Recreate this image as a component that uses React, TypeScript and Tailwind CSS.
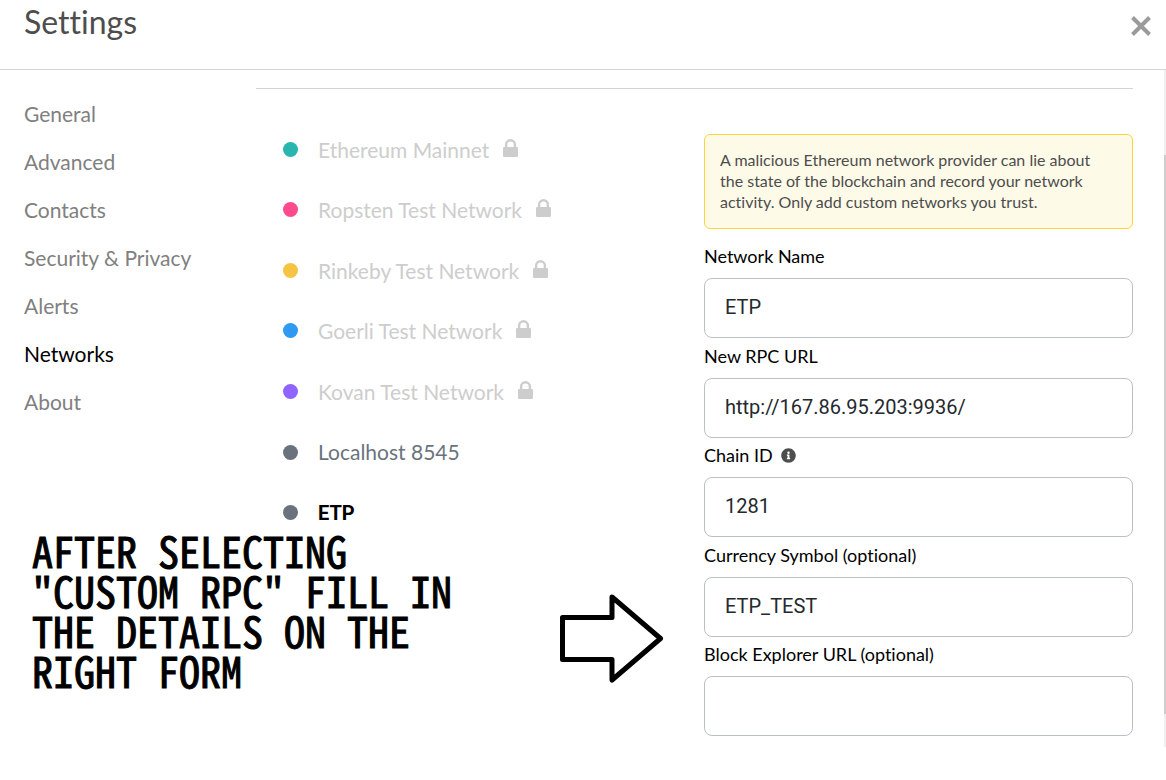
import { FaInfoCircle } from "react-icons/fa";

const tabs = ["General", "Advanced", "Contacts", "Security & Privacy", "Alerts", "Networks", "About"];

type Network = { name: string; dot: string; text: string; locked?: boolean };

const networks: Network[] = [
  { name: "Ethereum Mainnet", dot: "bg-[#29b6af]", text: "text-[21px] text-[#cdcdcd]", locked: true },
  { name: "Ropsten Test Network", dot: "bg-[#ff4a8d]", text: "text-[21px] text-[#cdcdcd]", locked: true },
  { name: "Rinkeby Test Network", dot: "bg-[#f6c343]", text: "text-[21px] text-[#cdcdcd]", locked: true },
  { name: "Goerli Test Network", dot: "bg-[#3099f2]", text: "text-[21px] text-[#cdcdcd]", locked: true },
  { name: "Kovan Test Network", dot: "bg-[#9064ff]", text: "text-[21px] text-[#cdcdcd]", locked: true },
  { name: "Localhost 8545", dot: "bg-[#6a737d]", text: "text-[21px] text-[#6a737d]" },
  { name: "ETP", dot: "bg-[#6a737d]", text: "font-['Roboto',sans-serif] text-xl font-bold text-black" },
];

const fields = [
  { id: "network-name", label: "Network Name", value: "ETP" },
  { id: "rpc-url", label: "New RPC URL", value: "http://167.86.95.203:9936/" },
  { id: "chain-id", label: "Chain ID", value: "1281", info: true },
  { id: "currency-symbol", label: "Currency Symbol (optional)", value: "ETP_TEST" },
  { id: "block-explorer", label: "Block Explorer URL (optional)", value: "" },
];

function LockIcon() {
  return (
    <svg viewBox="0 0 15 18" className="mb-[3px] ml-3.5 h-[18px] w-[15px]" aria-hidden="true">
      <path d="M3.1 9V5.6a4.4 4.4 0 0 1 8.8 0V9" fill="none" stroke="currentColor" strokeWidth="2.4" />
      <rect y="8" width="15" height="10" rx="1.2" fill="currentColor" />
    </svg>
  );
}

function Header() {
  return (
    <header className="flex h-[70px] items-start justify-between border-b border-[#d2d4d6] pl-6 pr-3.5">
      <h1 className="pt-1 text-[32px] leading-9 text-[#4d4d4d]">Settings</h1>
      <button type="button" aria-label="Close" className="mt-[15px] p-px text-[#9b9b9b]">
        <svg viewBox="0 0 20 20" className="size-5" stroke="currentColor" strokeWidth="4">
          <path d="M1.5 1.5 18.5 18.5M18.5 1.5 1.5 18.5" />
        </svg>
      </button>
    </header>
  );
}

function Sidebar() {
  return (
    <nav className="flex w-64 shrink-0 flex-col pl-6 pt-5">
      {tabs.map((tab) => (
        <a
          key={tab}
          href="#"
          aria-current={tab === "Networks" ? "page" : undefined}
          className={`flex h-12 items-center text-[21px] ${tab === "Networks" ? "text-black" : "text-[#808080]"}`}
        >
          {tab}
        </a>
      ))}
    </nav>
  );
}

function NetworkList() {
  return (
    <ul className="grid h-[424px] flex-1 auto-rows-fr pl-[27px]">
      {networks.map((n) => (
        <li key={n.name} className="flex">
          <button type="button" className={`flex items-center ${n.text}`}>
            <span className={`mr-5 size-[15px] rounded-full ${n.dot}`} />
            {n.name}
            {n.locked && <LockIcon />}
          </button>
        </li>
      ))}
    </ul>
  );
}

function NetworkForm() {
  return (
    <form className="mt-[15px] w-[429px]">
      <p className="rounded-md border border-[#ffd33d] bg-[#fefae8] px-[15px] pb-4 pt-3.5 text-base leading-[21px] text-[#4d4d4d]">
        A malicious Ethereum network provider can lie about the state of the blockchain and record your network
        activity. Only add custom networks you trust.
      </p>
      <div className="mt-[15px] grid h-[498px] auto-rows-fr">
        {fields.map((f) => (
          <div key={f.id}>
            <div className="mb-2.5 flex h-6 items-center gap-2 text-lg text-black">
              <label htmlFor={f.id}>{f.label}</label>
              {f.info && <FaInfoCircle className="size-[15px] text-[#4d4d4d]" />}
            </div>
            <input
              id={f.id}
              type="text"
              defaultValue={f.value}
              className="h-[60px] w-full rounded-lg border border-[#bbc0c5] px-5 pb-0.5 font-['Roboto',sans-serif] text-xl text-[#24292e]"
            />
          </div>
        ))}
      </div>
    </form>
  );
}

function Annotation() {
  return (
    <>
      <p className="absolute left-8 top-[530px] w-[440px] font-['Noto_Sans_Mono_CJK_JP','Liberation_Mono',monospace] text-[42px] leading-10 text-black [-webkit-text-stroke:1px_black]">
        AFTER SELECTING "CUSTOM RPC" FILL IN THE DETAILS ON THE RIGHT FORM
      </p>
      <svg
        viewBox="0 0 106 92"
        className="absolute left-[558px] top-[593px] h-[92px] w-[106px]"
        fill="none"
        stroke="#000"
        strokeWidth="5"
        strokeLinejoin="round"
      >
        <path d="M4.5 24.5H54V4L102.5 45.5 54 87V66.5H4.5Z" />
      </svg>
    </>
  );
}

export default function App() {
  return (
    <div className="relative min-h-screen bg-white font-['Lato',sans-serif] [font-variant-ligatures:none]">
      <Header />
      <div className="flex">
        <Sidebar />
        <main className="mr-[31px] min-w-0 flex-1 pt-[18px]">
          <hr className="border-[#d2d4d6]" />
          <div className="mt-[30px] flex items-start">
            <NetworkList />
            <NetworkForm />
          </div>
        </main>
        <div className="h-[677px] w-0.5 bg-[#f0f0f0] pt-[85px]">
          <div className="h-[559px] bg-[#cdcdcd]" />
        </div>
      </div>
      <Annotation />
    </div>
  );
}
